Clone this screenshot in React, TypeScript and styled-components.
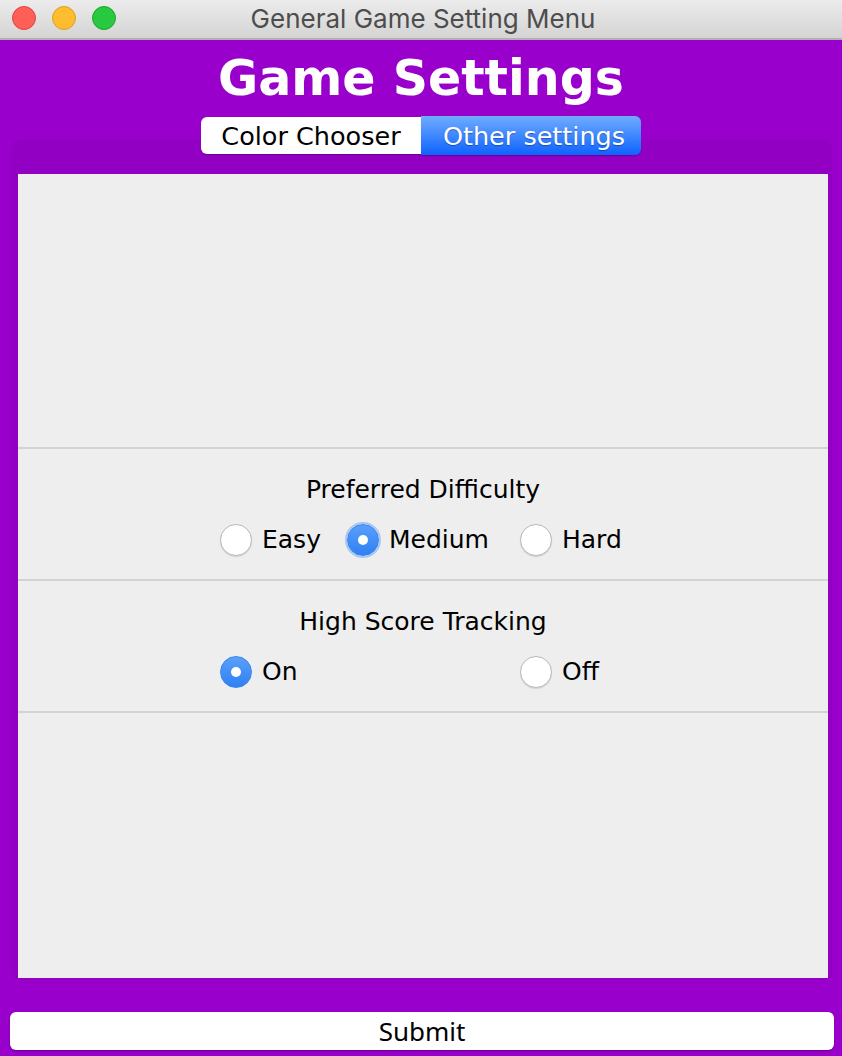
import React from "react";
import styled, { createGlobalStyle, css } from "styled-components";

const Global = createGlobalStyle`
  html, body { margin: 0; padding: 0; }
  body { width: 842px; height: 1056px; overflow: hidden; background: #9900cc; }
  * { box-sizing: border-box; }
`;

const Window = styled.div`
  width: 842px;
  height: 1056px;
  display: flex;
  flex-direction: column;
  font-family: "DejaVu Sans", sans-serif;
`;

const TitleBar = styled.div`
  height: 40px;
  display: grid;
  grid-template-columns: 1fr auto 1fr;
  align-items: center;
  background: linear-gradient(#ececec, #d4d4d4);
  border-bottom: 2px solid #b1b1b1;
`;

const Lights = styled.div`
  display: flex;
  gap: 16px;
  padding-left: 12px;
  align-self: start;
  padding-top: 6px;
`;

const lightColors = {
  red: ["#fe5f57", "#e0443e"],
  yellow: ["#febc2e", "#dea123"],
  green: ["#28c840", "#1aab29"],
} as const;

const Light = styled.span<{ $c: keyof typeof lightColors }>`
  width: 24px;
  height: 24px;
  border-radius: 50%;
  background: ${(p) => lightColors[p.$c][0]};
  border: 1px solid ${(p) => lightColors[p.$c][1]};
`;

const WindowTitle = styled.div`
  font-family: Inter, "Liberation Sans", sans-serif;
  font-size: 26px;
  line-height: 38px;
  color: #4d4d4d;
  align-self: start;
  padding-left: 4px;
`;

const Main = styled.main`
  flex: 1;
  background: #9900cc;
  display: flex;
  flex-direction: column;
  align-items: center;
  padding-top: 13.5px;
`;

const Heading = styled.h1`
  margin: 0;
  font-family: "DejaVu Sans", sans-serif;
  font-weight: bold;
  font-size: 49px;
  line-height: 49px;
  color: #ffffff;
`;

const TabStrip = styled.div`
  margin-top: 13.5px;
  display: flex;
  height: 39px;
  position: relative;
  z-index: 1;
`;

const Tab = styled.div<{ $active?: boolean; $pos: "first" | "last" }>`
  width: 220px;
  height: 39px;
  display: flex;
  align-items: center;
  justify-content: center;
  font-size: 25.5px;
  ${(p) =>
    p.$pos === "first"
      ? css`border-radius: 6px 0 0 6px;`
      : css`border-radius: 0 6px 6px 0;`}
  ${(p) =>
    p.$active
      ? css`
          background: linear-gradient(#70acff, #0e63ff);
          color: #ffffff;
          padding-left: 6px;
          text-shadow: 0 1px 1px rgba(0, 0, 40, 0.35);
          box-shadow: 0 1px 1px rgba(0, 0, 0, 0.25);
        `
      : css`
          background: #ffffff;
          color: #000000;
          height: 37px;
          margin-top: 1px;
          box-shadow: 0 1px 1px rgba(0, 0, 0, 0.25);
        `}
`;

const TabPanel = styled.section`
  align-self: stretch;
  margin: -15px 10px 0 12px;
  height: 840px;
  padding: 34px 4px 2px 6px;
  background: #9100c3;
  border-radius: 8px;
`;

const Content = styled.div`
  height: 804px;
  background: #eeeeee;
  display: flex;
  flex-direction: column;
`;

const Spacer = styled.div<{ $h?: number; $rule?: boolean }>`
  ${(p) => (p.$h ? css`height: ${p.$h}px;` : css`flex: 1;`)}
  ${(p) => p.$rule && css`border-top: 2px solid #d3d3d3;`}
`;

const Group = styled.fieldset`
  margin: 0;
  border: none;
  border-top: 2px solid #d3d3d3;
  height: 132px;
  padding: 26px 0 0;
  display: flex;
  flex-direction: column;
  align-items: center;
`;

const GroupTitle = styled.div`
  font-size: 25px;
  line-height: 30px;
  color: #000;
`;

const Options = styled.div`
  margin-top: 19px;
  margin-right: 5px;
  width: 401px;
  height: 32px;
  display: grid;
  grid-template-columns: 127px 173px auto;
  align-items: center;
`;

const Option = styled.label<{ $col?: number }>`
  display: flex;
  align-items: center;
  gap: 10px;
  font-size: 25px;
  line-height: 30px;
  color: #000;
  ${(p) => p.$col && css`grid-column: ${p.$col};`}
`;

const Radio = styled.span<{ $checked?: boolean; $focused?: boolean }>`
  width: 32px;
  height: 32px;
  border-radius: 50%;
  display: flex;
  align-items: center;
  justify-content: center;
  flex-shrink: 0;
  ${(p) =>
    p.$checked
      ? css`
          background: linear-gradient(#5aa0fb, #2f80f3);
          border: 1px solid #3a84ee;
          &::after {
            content: "";
            width: 10px;
            height: 10px;
            border-radius: 50%;
            background: #ffffff;
          }
        `
      : css`
          background: #ffffff;
          border: 1px solid #b9b9b9;
          box-shadow: 0 1px 1px rgba(0, 0, 0, 0.12);
        `}
  ${(p) =>
    p.$focused &&
    css`
      box-shadow: 0 0 0 2px rgba(110, 165, 245, 0.55);
    `}
`;

const SubmitButton = styled.button`
  align-self: stretch;
  margin: 32px 8px 0 10px;
  height: 38px;
  background: #ffffff;
  border: none;
  border-radius: 6px;
  box-shadow: 0 1px 2px rgba(0, 0, 0, 0.35);
  font-family: "Noto Sans", "DejaVu Sans", sans-serif;
  font-size: 26px;
  line-height: 36px;
  color: #000;
  padding: 0;
`;

export default function App() {
  return (
    <Window>
      <Global />
      <TitleBar>
        <Lights>
          <Light $c="red" />
          <Light $c="yellow" />
          <Light $c="green" />
        </Lights>
        <WindowTitle>General Game Setting Menu</WindowTitle>
        <span />
      </TitleBar>
      <Main>
        <Heading>Game Settings</Heading>
        <TabStrip>
          <Tab $pos="first">Color Chooser</Tab>
          <Tab $pos="last" $active>
            Other settings
          </Tab>
        </TabStrip>
        <TabPanel>
          <Content>
            <Spacer $h={273} />
            <Group>
              <GroupTitle>Preferred Difficulty</GroupTitle>
              <Options>
                <Option>
                  <Radio />
                  Easy
                </Option>
                <Option>
                  <Radio $checked $focused />
                  Medium
                </Option>
                <Option>
                  <Radio />
                  Hard
                </Option>
              </Options>
            </Group>
            <Group>
              <GroupTitle>High Score Tracking</GroupTitle>
              <Options>
                <Option>
                  <Radio $checked />
                  On
                </Option>
                <Option $col={3}>
                  <Radio />
                  Off
                </Option>
              </Options>
            </Group>
            <Spacer $rule />
          </Content>
        </TabPanel>
        <SubmitButton>Submit</SubmitButton>
      </Main>
    </Window>
  );
}
